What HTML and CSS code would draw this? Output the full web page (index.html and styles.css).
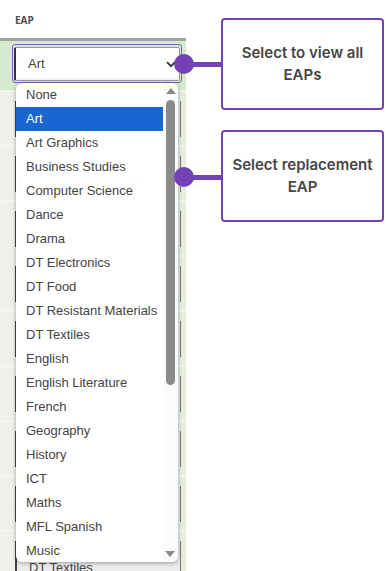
FILE: index.html
```html
<!DOCTYPE html>
<html>
<head>
<meta charset="utf-8">
<link rel="stylesheet" href="styles.css">
</head>
<body>
<div class="page">
  <div class="col">
    <div class="col-head">EAP</div>
    <div class="row row-active">
      <div class="select-ring">
        <div class="select">
          <span>Art</span>
          <svg class="chev" width="10" height="7" viewBox="0 0 10 7"><path d="M1 1.2 L5 5.2 L9 1.2" fill="none" stroke="#333" stroke-width="1.8"/></svg>
        </div>
      </div>
    </div>
    <div class="row"><div class="bg-select"></div></div>
    <div class="row"><div class="bg-select"></div></div>
    <div class="row"><div class="bg-select"></div></div>
    <div class="row"><div class="bg-select"></div></div>
    <div class="row"><div class="bg-select"></div></div>
    <div class="row"><div class="bg-select"></div></div>
    <div class="row"><div class="bg-select"></div></div>
    <div class="row"><div class="bg-select"></div></div>
    <div class="row"><div class="bg-select"><span>DT Textiles</span></div></div>
  </div>
  <div class="callouts">
    <div class="callout">Select to view all EAPs</div>
    <div class="callout">Select replacement EAP</div>
  </div>

  <div class="dropdown">
    <ul class="options">
      <li>None</li>
      <li class="sel">Art</li>
      <li>Art Graphics</li>
      <li>Business Studies</li>
      <li>Computer Science</li>
      <li>Dance</li>
      <li>Drama</li>
      <li>DT Electronics</li>
      <li>DT Food</li>
      <li>DT Resistant Materials</li>
      <li>DT Textiles</li>
      <li>English</li>
      <li>English Literature</li>
      <li>French</li>
      <li>Geography</li>
      <li>History</li>
      <li>ICT</li>
      <li>Maths</li>
      <li>MFL Spanish</li>
      <li>Music</li>
    </ul>
    <div class="scrollbar">
      <div class="arrow-up"></div>
      <div class="thumb"></div>
      <div class="arrow-down"></div>
    </div>
  </div>

  <div class="connector c1"><span class="dot"></span><span class="line"></span></div>
  <div class="connector c2"><span class="dot"></span><span class="line"></span></div>
</div>
</body>
</html>
```

FILE: styles.css
```css
* { box-sizing: border-box; }
html, body { margin: 0; padding: 0; background: #fff; }
body { width: 386px; height: 571px; overflow: hidden; font-family: "Liberation Sans", Arial, sans-serif; }

.page { position: relative; display: flex; width: 386px; height: 571px; overflow: hidden; }

.col { width: 186px; flex: none; display: flex; flex-direction: column; }
.col-head {
  height: 38px;
  flex: none;
  padding: 13px 0 0 15px;
  font-family: "Open Sans", sans-serif;
  font-weight: 700;
  font-size: 10px;
  color: #4d4d4d;
}
.row {
  height: 55px;
  flex: none;
  border-top: 2px solid #f4f4f4;
  background: linear-gradient(90deg, #eef2ea 0%, #e6eee0 100%);
  padding: 9px 5px 0 15px;
}
.row-active {
  height: 52px;
  border-top: 3px solid #a3a3a3;
  background: #d4eccd;
  padding: 3px 4px 0 12px;
}
.select-ring {
  height: 39px;
  border: 1px solid #8a5cc4;
  border-radius: 3px;
  padding: 2px 1px 1px 1px;
}
.select {
  height: 34px;
  background: #fff;
  border: 1px solid #9a9a9a;
  border-left: 2px solid #333;
  border-radius: 2px;
  display: flex;
  align-items: center;
  justify-content: space-between;
  padding: 0 3px 1px 12px;
  font-size: 13px;
  color: #444;
  box-shadow: inset 0 -2px 2px rgba(0,0,0,0.06);
}
.chev { margin-top: 2px; }
.bg-select {
  height: 36px;
  border-left: 2px solid #444;
  border-right: 1px solid #777;
  background: #ececec;
  font-size: 13px;
  line-height: 15px;
  color: #444;
  padding: 19px 0 0 12px;
}

.callouts {
  display: flex;
  flex-direction: column;
  gap: 20px;
  padding: 18px 0 0 35px;
}
.callout {
  width: 163px;
  height: 92px;
  border: 2px solid #7242b6;
  border-radius: 4px;
  display: flex;
  align-items: center;
  justify-content: center;
  text-align: center;
  padding: 0 2px;
  font-family: Inter, "Open Sans", sans-serif;
  font-weight: 600;
  font-size: 15px;
  line-height: 22px;
  color: #454545;
}

.dropdown {
  position: absolute;
  left: 16px;
  top: 83px;
  width: 162px;
  height: 479px;
  background: #fff;
  border-radius: 6px;
  box-shadow: 0 1px 4px rgba(0,0,0,0.35);
  overflow: hidden;
  display: flex;
}
.options {
  list-style: none;
  margin: 0;
  padding: 0;
  width: 147px;
  flex: none;
}
.options li {
  height: 24px;
  line-height: 24px;
  padding-left: 10px;
  font-size: 13px;
  color: #444;
  white-space: nowrap;
}
.options li.sel { background: #1966d2; color: #fff; }
.scrollbar {
  width: 15px;
  flex: none;
  background: #fbfbfb;
  display: flex;
  flex-direction: column;
  align-items: center;
  position: relative;
}
.arrow-up {
  margin-top: 5px;
  width: 0; height: 0;
  border-left: 5px solid transparent;
  border-right: 5px solid transparent;
  border-bottom: 6px solid #8a8a8a;
}
.thumb {
  margin-top: 6px;
  width: 9px;
  height: 285px;
  background: #8a8a8a;
  border-radius: 5px;
}
.arrow-down {
  position: absolute;
  bottom: 5px;
  left: 2px;
  width: 0; height: 0;
  border-left: 5px solid transparent;
  border-right: 5px solid transparent;
  border-top: 6px solid #8a8a8a;
}

.connector {
  position: absolute;
  left: 174px;
  display: flex;
  align-items: center;
}
.connector.c1 { top: 54px; }
.connector.c2 { top: 167px; }
.dot {
  width: 20px;
  height: 20px;
  border-radius: 50%;
  background: #7242b6;
}
.line {
  width: 30px;
  height: 5px;
  margin-left: -2px;
  background: #7242b6;
}
```
